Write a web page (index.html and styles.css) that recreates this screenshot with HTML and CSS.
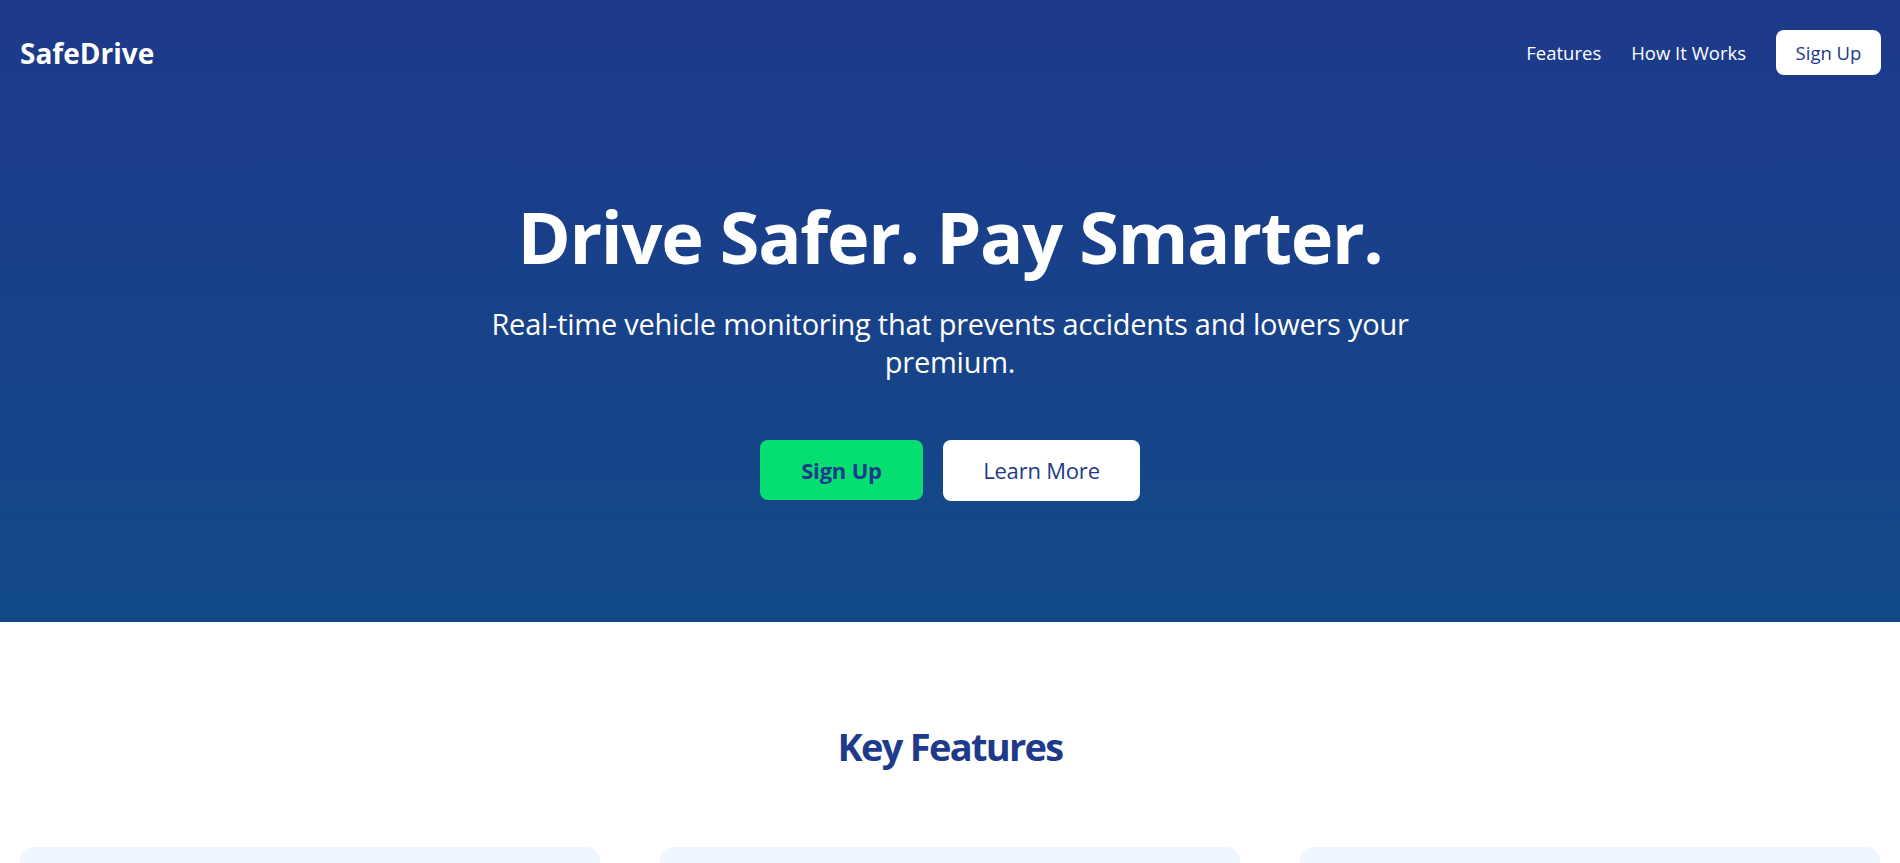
FILE: index.html
```html
<!DOCTYPE html>
<html lang="en">
<head>
<meta charset="utf-8">
<title>SafeDrive</title>
<link rel="stylesheet" href="styles.css">
</head>
<body>
<header class="hero">
  <nav class="nav">
    <div class="logo">SafeDrive</div>
    <div class="nav-links">
      <a class="nav-link" href="#features">Features</a>
      <a class="nav-link" href="#how">How It Works</a>
      <a class="nav-btn" href="#signup">Sign Up</a>
    </div>
  </nav>
  <div class="hero-content">
    <h1 class="hero-title">Drive Safer. Pay Smarter.</h1>
    <p class="hero-sub">Real-time vehicle monitoring that prevents accidents and lowers your premium.</p>
    <div class="hero-actions">
      <a class="btn btn-primary" href="#signup">Sign Up</a>
      <a class="btn btn-secondary" href="#features">Learn More</a>
    </div>
  </div>
</header>
<section class="features" id="features">
  <h2 class="section-title">Key Features</h2>
  <div class="cards">
    <div class="card"></div>
    <div class="card"></div>
    <div class="card"></div>
  </div>
</section>
</body>
</html>
```
FILE: styles.css
```css
* { box-sizing: border-box; }
html, body { margin: 0; padding: 0; }
body {
  font-family: "Open Sans", "Noto Sans", "Liberation Sans", sans-serif;
  color: #1e3a8a;
  background: #ffffff;
  overflow: hidden;
}
a { text-decoration: none; }

.hero {
  height: 622px;
  background: linear-gradient(180deg, #1e398b 0%, #124a88 100%);
  color: #ffffff;
}

.nav {
  display: flex;
  align-items: center;
  justify-content: space-between;
  padding: 30px 19px 0 20px;
}
.logo {
  font-size: 28px;
  font-weight: 700;
  letter-spacing: 0;
  color: #ffffff;
}
.nav-links {
  display: flex;
  align-items: center;
}
.nav-link {
  color: #ffffff;
  font-size: 18.5px;
  margin-right: 30px;
}
.nav-btn {
  display: flex;
  align-items: center;
  justify-content: center;
  width: 105px;
  height: 45px;
  background: #ffffff;
  color: #1e3a8a;
  border-radius: 8px;
  font-size: 18.5px;
}

.hero-content {
  display: flex;
  flex-direction: column;
  align-items: center;
  text-align: center;
  padding-top: 118px;
}
.hero-title {
  margin: 0;
  font-size: 72px;
  line-height: 1.2;
  font-weight: 700;
  letter-spacing: -1.3px;
}
.hero-sub {
  margin: 26px 0 0;
  max-width: 980px;
  font-size: 29px;
  line-height: 1.3;
  letter-spacing: -0.25px;
}
.hero-actions {
  display: flex;
  align-items: flex-start;
  gap: 20px;
  margin-top: 59px;
}
.btn {
  display: flex;
  align-items: center;
  justify-content: center;
  border-radius: 8px;
  font-size: 22px;
  color: #1e3a8a;
  letter-spacing: -0.2px;
}
.btn-primary {
  width: 163px;
  height: 60px;
  background: #05df72;
  font-weight: 700;
}
.btn-secondary {
  width: 197px;
  height: 61px;
  background: #ffffff;
  font-weight: 500;
}

.features {
  padding: 102px 20px 0;
}
.section-title {
  margin: 0;
  text-align: center;
  font-size: 38px;
  line-height: 1.2;
  font-weight: 700;
  letter-spacing: -1.7px;
  color: #1e3a8a;
}
.cards {
  display: grid;
  grid-template-columns: repeat(3, 1fr);
  gap: 60px;
  margin-top: 77px;
}
.card {
  height: 300px;
  background: #eff6ff;
  border-radius: 14px;
}
```
